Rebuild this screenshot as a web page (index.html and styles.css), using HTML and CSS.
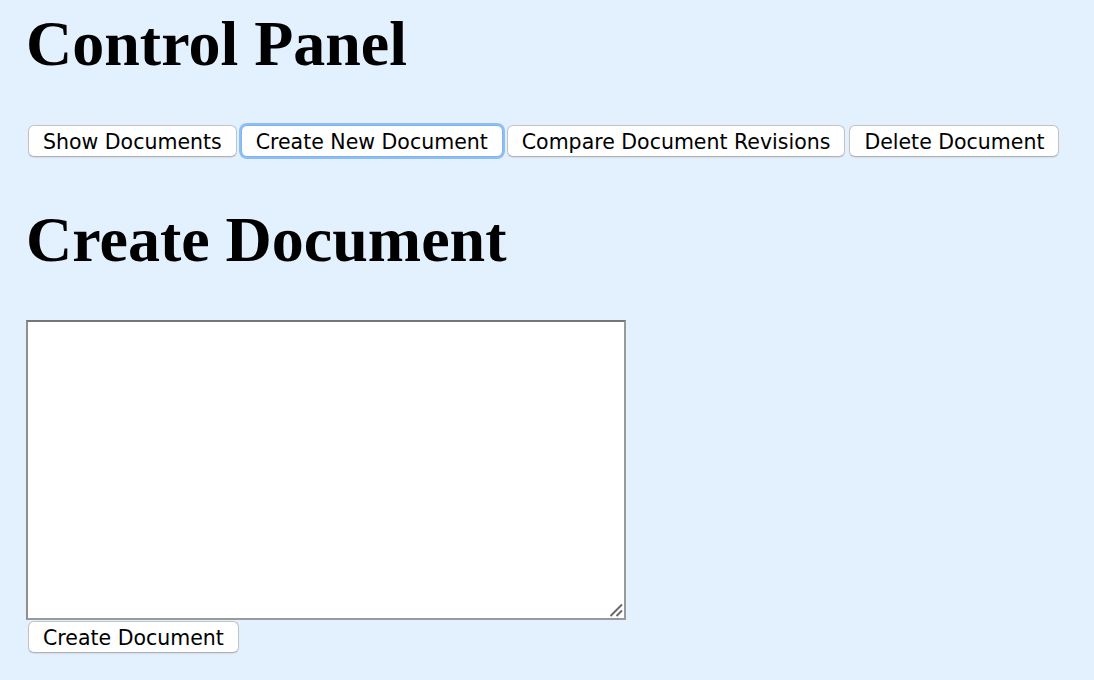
FILE: index.html
```html
<!DOCTYPE html>
<html lang="en">
<head>
<meta charset="utf-8">
<title>Control Panel</title>
<link rel="stylesheet" href="styles.css">
</head>
<body>
<h1 class="title">Control Panel</h1>
<div class="toolbar">
  <button class="btn">Show Documents</button>
  <button class="btn btn-focus">Create New Document</button>
  <button class="btn">Compare Document Revisions</button>
  <button class="btn">Delete Document</button>
</div>
<h2 class="title title-second">Create Document</h2>
<div class="form">
  <div class="area-wrap">
    <textarea class="area"></textarea>
    <svg class="grip" width="14" height="14" viewBox="0 0 14 14"><path d="M1.5 13 L13 1.5 M7.5 13 L13 7.5" stroke="#6a6a6a" stroke-width="2" fill="none"/></svg>
  </div>
  <button class="btn btn-submit">Create Document</button>
</div>
</body>
</html>
```
FILE: styles.css
```css
html, body {
  margin: 0;
  padding: 0;
  background: #e3f0fe;
}
body {
  padding: 0 26px;
  min-height: 680px;
  box-sizing: border-box;
}
.title {
  margin: 7px 0 0;
  font-family: "Liberation Serif", "Times New Roman", serif;
  font-weight: bold;
  font-size: 64px;
  line-height: 74px;
  color: #000;
}
.title-second {
  margin-top: 46px;
}
.toolbar {
  display: flex;
  gap: 4px;
  margin-top: 44px;
  padding-left: 2px;
}
.btn {
  box-sizing: border-box;
  height: 32px;
  padding: 2px 14px 0;
  border: 1px solid #c3c3c3;
  border-bottom-color: #b3b3b3;
  border-radius: 6px;
  background: #fff;
  box-shadow: 0 1px 1px rgba(0,0,0,0.08);
  font-family: "DejaVu Sans", "Inter", sans-serif;
  font-size: 20.5px;
  line-height: 28px;
  color: #000;
  white-space: nowrap;
}
.btn-focus {
  border-color: #7eb4f2;
  box-shadow: 0 0 0 2px #8fbef4;
}
.form {
  display: flex;
  flex-direction: column;
  align-items: flex-start;
  gap: 1px;
  margin-top: 43px;
}
.area-wrap {
  position: relative;
  width: 600px;
  height: 300px;
}
.area {
  display: block;
  box-sizing: border-box;
  width: 600px;
  height: 300px;
  margin: 0;
  background: #fff;
  border: 2px solid #8f8f8f;
  border-top-color: #767676;
  border-bottom-color: #9a9a9a;
  border-right-color: #9a9a9a;
  resize: none;
  outline: none;
}
.grip {
  position: absolute;
  right: 3px;
  bottom: 3px;
}
.btn-submit {
  margin-left: 2px;
}
```
